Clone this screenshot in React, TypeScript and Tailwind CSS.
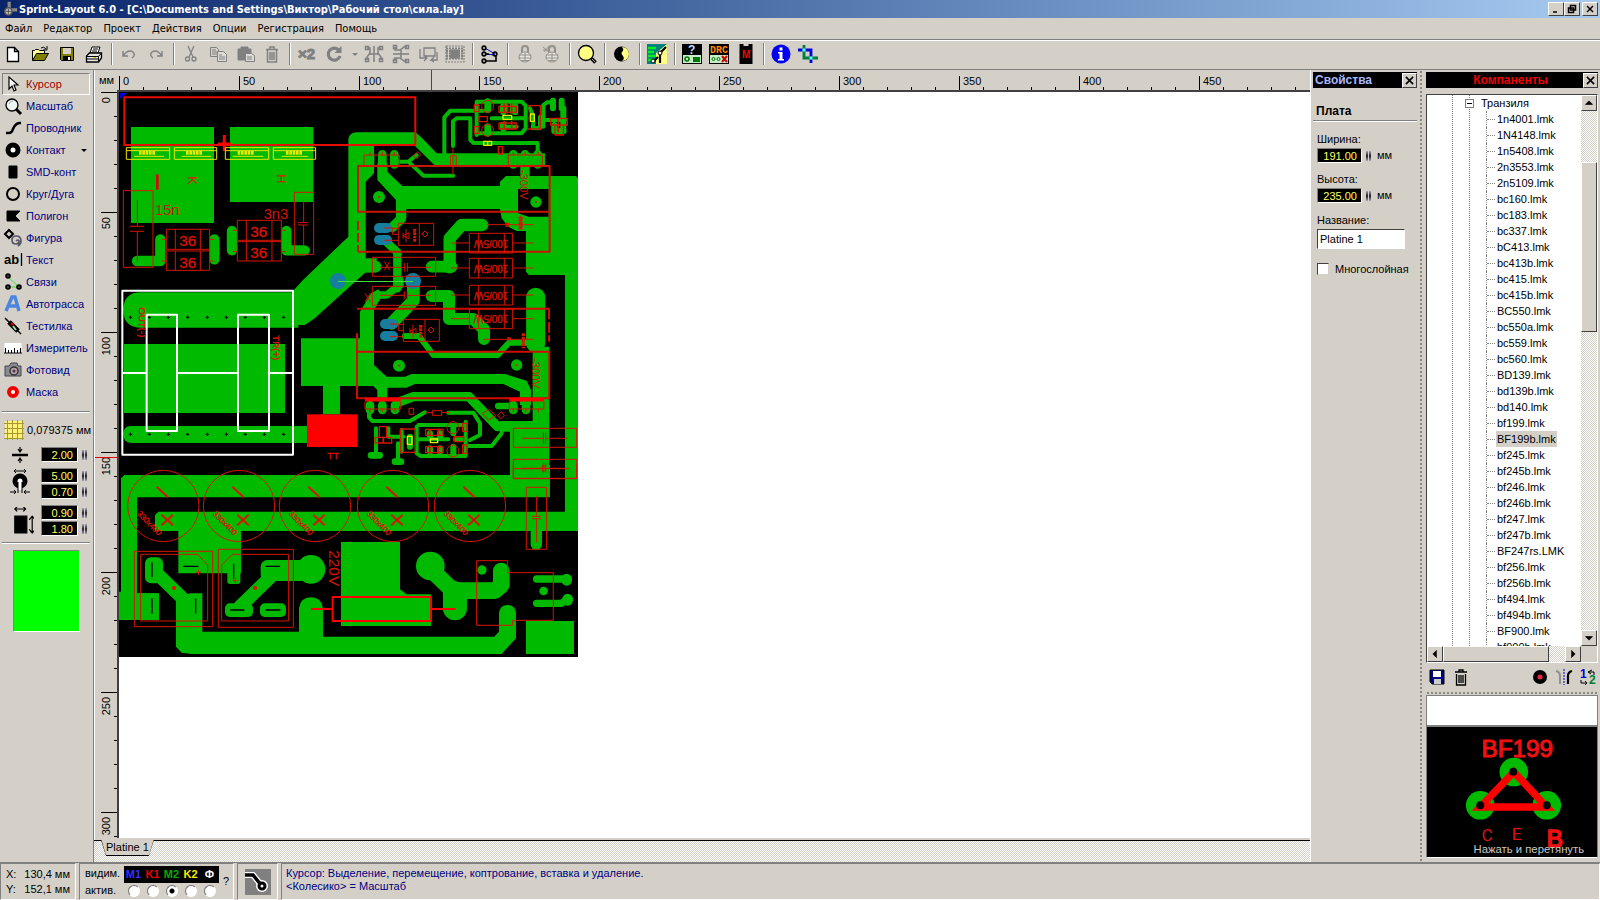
import React from "react";
import clsx from "clsx";

const RAISED = "bg-[#d4d0c8] border border-t-white border-l-white border-b-[#404040] border-r-[#404040]";
const SUNKEN = "border border-t-[#808080] border-l-[#808080] border-b-white border-r-white";
const CHECKER =
  "bg-[repeating-conic-gradient(#ffffff_0_25%,#d4d0c8_0_50%)] bg-[length:2px_2px]";
const DOTS = "bg-[radial-gradient(#8c8880_1px,transparent_1px)] bg-[length:4px_4px]";

const GREEN = "#00ba00";
const RED = "#d81400";

const MENU = ["Файл", "Редактор", "Проект", "Действия", "Опции", "Регистрация", "Помощь"];

const PARTS = [
  "1n4001.lmk", "1N4148.lmk", "1n5408.lmk", "2n3553.lmk", "2n5109.lmk", "bc160.lmk", "bc183.lmk",
  "bc337.lmk", "bC413.lmk", "bc413b.lmk", "bc415.lmk", "bc415b.lmk", "BC550.lmk", "bc550a.lmk",
  "bc559.lmk", "bc560.lmk", "BD139.lmk", "bd139b.lmk", "bd140.lmk", "bf199.lmk", "BF199b.lmk",
  "bf245.lmk", "bf245b.lmk", "bf246.lmk", "bf246b.lmk", "bf247.lmk", "bf247b.lmk", "BF247rs.LMK",
  "bf256.lmk", "bf256b.lmk", "bf494.lmk", "bf494b.lmk", "BF900.lmk", "bf900b.lmk",
];

function Icon({ children, className = "size-5" }: { children: React.ReactNode; className?: string }) {
  return (
    <svg viewBox="0 0 20 20" fill="none" stroke="#000" className={clsx("shrink-0", className)} aria-hidden="true">
      {children}
    </svg>
  );
}

/* ---------- toolbar ---------- */

const padlock = (
  <>
    <path d="M7 9V5q0-3 3-3t3 3v4" strokeWidth="2" />
    <ellipse cx="10" cy="13" rx="6" ry="5" fill="#e8e6e0" />
    <path d="M4 11h12M4 14h12M6 16.500h8M10 9v8" />
  </>
);

const TOOLBAR: ({ name: string; art: React.ReactNode } | "sep" | "drop")[] = [
  { name: "Новый", art: <path d="M4.500 3.500h7l4 4v10h-11zM11.500 3.500v4h4" fill="#fff" strokeWidth="1.300" /> },
  {
    name: "Открыть",
    art: (
      <>
        <path d="M2.500 16.500v-10h2l1-1h3l1 1h5v3" fill="#ffff9c" />
        <path d="M2.500 16.500l4-7h12l-4 7z" fill="#808000" />
        <path d="M11 4q3-2 5 1M17 2v4h-4" />
      </>
    ),
  },
  {
    name: "Сохранить",
    art: (
      <>
        <path d="M3.500 3.500h13v13h-12l-1-1z" fill="#808000" />
        <path d="M6 4h8v6H6z" fill="#d4d0c8" stroke="none" />
        <path d="M6 12h8v4.500H6z" fill="#000" stroke="none" />
        <path d="M11 13h2v3h-2z" fill="#fff" stroke="none" />
      </>
    ),
  },
  {
    name: "Печать",
    art: (
      <>
        <path d="M6 9l2-6h8l-2 6z" fill="#fff" />
        <path d="M9 5h5M8 7h5" />
        <path d="M2.500 12l3-3h12v5l-3 4h-12z" fill="#e8e6e0" strokeWidth="1.300" />
        <path d="M2.500 12.500h12v5M14.500 12.500l3-3.500M3 15h11" />
        <path d="M10 13.500h2" stroke="#cc0" />
      </>
    ),
  },
  "sep",
  { name: "Отменить", art: <path d="M4 7v5h5M4.500 11.500Q9 5 14 8q3 3-1 6" stroke="#808080" strokeWidth="1.400" /> },
  { name: "Вернуть", art: <path d="M16 7v5h-5M15.500 11.500Q11 5 6 8q-3 3 1 6" stroke="#808080" strokeWidth="1.400" /> },
  "sep",
  {
    name: "Вырезать",
    art: (
      <g stroke="#808080" strokeWidth="1.300">
        <path d="M7 2l5 11M13 2L8 13" />
        <circle cx="6.500" cy="15" r="2" />
        <circle cx="13" cy="15" r="2" />
      </g>
    ),
  },
  {
    name: "Копировать",
    art: (
      <g stroke="#808080">
        <path d="M2.500 3.500h6l2 2v7h-8z M4 6h4M4 8h5M4 10h5" />
        <path d="M9.500 7.500h6l3 3v7h-9z M11 11h3M11 13h6M11 15h6" fill="#dedbd4" />
      </g>
    ),
  },
  {
    name: "Вставить",
    art: (
      <g stroke="#808080">
        <path d="M3 5h13v11H3zM6 3h7v3H6z" fill="#808080" />
        <path d="M10.500 9.500h6l3 2v6h-9zM12 13h5M12 15h5" fill="#dedbd4" />
      </g>
    ),
  },
  {
    name: "Удалить",
    art: <path d="M4 5.500h12M8 5V3h4v2M5.500 6v12h9V6M8 8v8M10 8v8M12 8v8" stroke="#808080" strokeWidth="1.500" />,
  },
  "sep",
  {
    name: "Дублировать",
    art: (
      <text x="1" y="15" fontSize="15" fontWeight="bold" fill="#808080" stroke="#808080">
        ×2
      </text>
    ),
  },
  {
    name: "Повернуть",
    art: (
      <>
        <path d="M15 6.500A6 6 0 1 0 16 12" stroke="#808080" strokeWidth="3.200" />
        <path d="M17.500 2v7h-7z" fill="#808080" stroke="none" />
      </>
    ),
  },
  "drop",
  {
    name: "Зеркало по горизонтали",
    art: (
      <g stroke="#808080" strokeWidth="1.500">
        <path d="M3 4h3v5L3 13v3M17 4h-3v5l3 4v3M10 2v16M6 10h8" />
        <path d="M1.500 2.500h3v3h-3zM15.500 2.500h3v3h-3zM1.500 14.500h3v3h-3zM15.500 14.500h3v3h-3z" />
      </g>
    ),
  },
  {
    name: "Зеркало по вертикали",
    art: (
      <g stroke="#808080" strokeWidth="1.500">
        <path d="M4 3v3h5l4-3h3M4 17v-3h5l4 3h3M2 10h16M10 6v8" />
        <path d="M2.500 1.500h3v3h-3zM2.500 15.500h3v3h-3zM14.500 1.500h3v3h-3zM14.500 15.500h3v3h-3z" />
      </g>
    ),
  },
  {
    name: "Выровнять",
    art: (
      <g stroke="#808080" strokeWidth="1.300">
        <path d="M6 4h11v8H6zM2 5v9h6M6 11l3 3-3 3M19 8v8h-6l3-3M13 16l3 2" />
      </g>
    ),
  },
  {
    name: "Сетка",
    art: (
      <g stroke="#808080" strokeWidth="1.200">
        <path d="M1 2h18v16H1z" strokeDasharray="2 1" />
        <path d="M1 4.500h18M1 7h18M1 9.500h18M1 12h18M1 14.500h18" strokeDasharray="2 1" strokeWidth="1.800" />
        <path d="M6 6h8v8H6z" fill="#808080" />
      </g>
    ),
  },
  "sep",
  {
    name: "Соединения",
    art: (
      <>
        <path d="M5 4l10 6M5 10l10 1" stroke="#0000c8" />
        <path d="M5 17h11v-6M5 10h4" strokeWidth="1.600" />
        <g strokeWidth="1.700">
          <circle cx="4" cy="4" r="1.800" />
          <circle cx="4" cy="10" r="1.800" />
          <circle cx="4" cy="17" r="1.800" />
          <circle cx="15" cy="10" r="1.800" />
        </g>
      </>
    ),
  },
  "sep",
  { name: "Закрепить", art: <g stroke="#929089">{padlock}</g> },
  { name: "Освободить", art: <g stroke="#929089">{padlock}<path d="M1 3l6 5M7 2L2 8M1 6h6" /></g> },
  "sep",
  {
    name: "Лупа",
    art: (
      <>
        <circle cx="9" cy="9" r="7.500" fill="#ffff84" strokeWidth="1.300" />
        <path d="M14.500 14.500l4 4" strokeWidth="3.500" />
        <path d="M15 15l3 3" stroke="#aaa" />
      </>
    ),
  },
  "sep",
  {
    name: "Контраст",
    art: (
      <>
        <circle cx="9.500" cy="10" r="7.500" fill="#000" stroke="none" />
        <path d="M10 3a7 7 0 0 1 0 14q3-2 1-5-3-3 0-5 1-2-1-4z" fill="#ffff84" stroke="none" />
      </>
    ),
  },
  "sep",
  {
    name: "Фото",
    art: (
      <>
        <path d="M0 0h20v20H0z" fill="#ffff84" stroke="none" />
        <path d="M0 0h20L9 9v11H0z" fill="#008080" stroke="none" />
        <path d="M1 4h8M1 8h6M1 12h8M1 16h6" stroke="#0e2" strokeWidth="2.500" />
        <path d="M19 3l-6 6v10M6 18l5-5" strokeWidth="2.200" />
        <circle cx="13" cy="9" r="2" fill="#fff" />
        <circle cx="6" cy="17" r="2" fill="#fff" />
      </>
    ),
  },
  "sep",
  {
    name: "Справка по плате",
    art: (
      <>
        <path d="M0 0h20v20H0z" fill="#000" stroke="none" />
        <path d="M1 11h18v8H1z" fill="#c8ecc8" stroke="none" />
        <text x="6" y="10" fontSize="12" fontWeight="bold" fill="#bdf" stroke="none">?</text>
        <circle cx="5" cy="15" r="2" stroke="#007800" strokeWidth="1.600" />
        <path d="M11 13h7v5h-7z" fill="#007800" stroke="none" />
      </>
    ),
  },
  {
    name: "DRC",
    art: (
      <>
        <path d="M0 0h20v20H0z" fill="#000" stroke="none" />
        <path d="M1 11h18v8H1z" fill="#c8ecc8" stroke="none" />
        <text x="1" y="9" fontSize="10" fontWeight="bold" fill="#f80" stroke="none" fontFamily="Liberation Mono">DRC</text>
        <circle cx="4.500" cy="15" r="1.500" stroke="#007800" />
        <circle cx="9.500" cy="15" r="1.500" stroke="#007800" />
        <path d="M13 12l5 6M18 12l-5 6" stroke="#c00" strokeWidth="2" />
      </>
    ),
  },
  {
    name: "Макрос",
    art: (
      <>
        <path d="M3.500 0h4v2h5V0h4v20h-13z" fill="#000" stroke="none" />
        <text x="6" y="14" fontSize="10" fontWeight="bold" fill="#f00" stroke="none">M</text>
      </>
    ),
  },
  "sep",
  {
    name: "Информация",
    art: (
      <>
        <circle cx="10" cy="10" r="9.500" fill="#0000f0" stroke="none" />
        <path d="M8.500 3.500h3v3h-3zM7 8h4.500v7H13v1.500H7V15h1.500V9.500H7z" fill="#fff" stroke="none" />
      </>
    ),
  },
  {
    name: "Обрезка",
    art: (
      <>
        <path d="M0 6h13v13" stroke="#0000e0" strokeWidth="2.800" />
        <path d="M6 1v13h14" stroke="#007c3c" strokeWidth="2.800" />
        <path d="M4.500 4.500h3v3h-3zM11.500 12.500h3v3h-3z" fill="#5ff" stroke="none" />
      </>
    ),
  },
];

function Toolbar() {
  return (
    <div className="flex h-[31px] items-center border-t border-b border-t-[#808080] border-b-[#808080] pb-px shadow-[inset_0_1px_#fff]">
      {TOOLBAR.map((t, i) => {
        if (t === "sep") return <span key={i} className="ml-[3px] mr-1 h-[22px] w-px bg-[#808080] shadow-[1px_0_#fff]" />;
        if (t === "drop")
          return (
            <button key={i} type="button" aria-label="Угол" className="flex w-[13px] justify-center">
              <span className="border-x-[3px] border-t-[3px] border-x-transparent border-t-[#808080]" />
            </button>
          );
        return (
          <button key={i} type="button" title={t.name} className="flex w-[27px] justify-center pr-[2px]">
            <Icon>{t.art}</Icon>
          </button>
        );
      })}
    </div>
  );
}

/* ---------- left panel ---------- */

const TOOLS: { label: string; art: React.ReactNode }[] = [
  { label: "Курсор", art: <path d="M6 3v12l3-3 2 5 2-1-2-5h4z" fill="#fff" strokeWidth="1.200" /> },
  {
    label: "Масштаб",
    art: (
      <>
        <circle cx="9" cy="9" r="6" fill="#eef4f4" strokeWidth="1.300" />
        <path d="M13 13l5 5" strokeWidth="3" />
        <path d="M6 8q1-3 4-3" stroke="#9bb" />
      </>
    ),
  },
  { label: "Проводник", art: <path d="M3 15h3q3 0 4-4 2-5 6-6h2" strokeWidth="2.500" /> },
  { label: "Контакт", art: <circle cx="10" cy="10" r="5" fill="#fff" strokeWidth="5" /> },
  { label: "SMD-конт", art: <path d="M6 4h8v12H6z" fill="#000" /> },
  { label: "Круг/Дуга", art: <circle cx="10" cy="10" r="6" strokeWidth="2" /> },
  { label: "Полигон", art: <path d="M4 5h13l-5 5 5 5H4z" fill="#000" /> },
  {
    label: "Фигура",
    art: (
      <>
        <path d="M6 2l4 4-4 4-4-4z" strokeWidth="2" />
        <path d="M13 13q2-2 3 0 0 3-3 3-4 0-4-4t4-4q5 0 5 5 0 3-3 5" stroke="#556" strokeWidth="1.700" />
      </>
    ),
  },
  {
    label: "Текст",
    art: (
      <>
        <text x="1" y="14" fontSize="13" fontWeight="bold" fill="#000" stroke="none">ab</text>
        <path d="M18.500 3v13" strokeWidth="1.300" />
      </>
    ),
  },
  {
    label: "Связи",
    art: (
      <>
        <path d="M5 5l11 10H5" stroke="#3e3" />
        <g strokeWidth="2.200" fill="#fff">
          <circle cx="5" cy="4" r="1.700" />
          <circle cx="5" cy="15" r="1.700" />
          <circle cx="16" cy="15" r="1.700" />
        </g>
      </>
    ),
  },
  { label: "Автотрасса", art: <path d="M3 17L9 3h3l4 14M6 12h8" stroke="#4a86e0" strokeWidth="3.400" /> },
  {
    label: "Тестилка",
    art: (
      <>
        <path d="M2 2l5 5M14 14l4 4" strokeWidth="1.500" />
        <path d="M6 6l9 9" strokeWidth="5" />
        <path d="M8 7l2 2" stroke="#e00" strokeWidth="2" />
        <path d="M10 10l3 4" stroke="#9ed89e" strokeWidth="2" />
      </>
    ),
  },
  {
    label: "Измеритель",
    art: (
      <>
        <path d="M1.500 5h17v10h-17z" fill="#fff" stroke="none" />
        <path d="M1 15h18M2.500 15v-5M5.500 15v-3M8.500 15v-3M11.500 15v-5M14.500 15v-3M17.500 15v-5" />
      </>
    ),
  },
  {
    label: "Фотовид",
    art: (
      <>
        <path d="M2 6h4l2-3h6l1 3h3v10H2z" fill="#8a8a92" stroke="#44444c" />
        <circle cx="11" cy="11" r="4" fill="#b9a0a0" stroke="#333" strokeWidth="1.500" />
        <circle cx="11" cy="11" r="1.500" fill="#435" stroke="none" />
      </>
    ),
  },
  { label: "Маска", art: <circle cx="10" cy="10" r="4" fill="#fff" stroke="#f00000" strokeWidth="4" /> },
];

function Knob() {
  return (
    <span className="flex gap-px" aria-hidden="true">
      <span className="h-[10px] w-[2px] bg-gradient-to-b from-[#a8a8b8] via-[#202030] to-[#a8a8b8]" />
      <span className="h-[10px] w-[2px] bg-gradient-to-b from-[#a8a8b8] via-[#202030] to-[#a8a8b8]" />
    </span>
  );
}

function NumField({ label, value, className }: { label: string; value: string; className: string }) {
  return (
    <span className="flex items-center gap-1">
      <input
        aria-label={label}
        defaultValue={value}
        className={clsx("h-[15px] border border-[#808080] border-r-white border-b-white bg-black px-1 text-right text-[11px] leading-none text-[#ffff60]", className)}
      />
      <Knob />
    </span>
  );
}

function ToolPanel() {
  return (
    <aside className="flex w-[94px] shrink-0 flex-col border-r border-r-[#808080] px-[2px] pt-[3px]">
      <nav className="flex flex-col">
        {TOOLS.map((t, i) => (
          <button
            key={t.label}
            type="button"
            className={clsx(
              "flex h-[22px] items-center gap-[3px] whitespace-nowrap border text-[11px] text-[#000080]",
              i === 0 ? "mr-px border-t-[#808080] border-l-[#808080] border-b-white border-r-white text-[#a00000]" : "border-transparent"
            )}
          >
            <Icon>{t.art}</Icon>
            <span>{t.label}</span>
            {t.label === "Контакт" && (
              <span className="ml-3 border-x-[3px] border-t-[3px] border-x-transparent border-t-black" />
            )}
          </button>
        ))}
      </nav>
      <hr className="mt-2 mr-px border-t-[#808080] shadow-[0_1px_#fff]" />
      <button type="button" className="mt-[8px] flex h-[20px] items-center gap-[3px] whitespace-nowrap pl-[2px] text-[11px]">
        <Icon>
          <path d="M1 1h18v18H1z" fill="#fff078" stroke="none" />
          <path d="M3.500 0v20M8.500 0v20M13.500 0v20M0 3.500h20M0 8.500h20M0 13.500h20M18.500 0v20M0 18.500h20" stroke="#a89830" />
        </Icon>
        <span>0,079375 мм</span>
      </button>
      <div className="mt-[7px] flex flex-col gap-[6px]">
        <div className="flex h-[15px] items-center justify-between pl-2 pr-1">
          <Icon>
            <path d="M2 10h16" strokeWidth="2.500" />
            <path d="M10 2v4M10 14v4M8 4l2 3 2-3M8 16l2-3 2 3" strokeWidth="1.200" />
          </Icon>
          <NumField label="Ширина проводника" value="2.00" className="w-[37px]" />
        </div>
        <div className="flex h-[31px] items-center justify-between pl-2 pr-1">
          <Icon className="h-[30px] w-[20px]">
            <g transform="translate(0 -3)">
              <path d="M4 0h12M6-2L4 0l2 2M14-2l2 2-2 2" />
              <circle cx="10" cy="10" r="5" fill="#fff" strokeWidth="5" />
              <path d="M8 11h4v8H8z" fill="#fff" stroke="none" />
              <path d="M8 11v11M12 11v11M0 21h6M4 19l2 2-2 2M20 21h-6M16 19l-2 2 2 2" />
            </g>
          </Icon>
          <div className="flex flex-col gap-px">
            <NumField label="Диаметр контакта" value="5.00" className="w-[37px]" />
            <NumField label="Отверстие" value="0.70" className="w-[37px]" />
          </div>
        </div>
        <div className="flex h-[31px] items-center justify-between pl-2 pr-1">
          <Icon className="h-[28px] w-[24px]">
            <path d="M4 6h10v14H4z" fill="#000" />
            <path d="M4 0h9M6-2L4 0l2 2M11-2l2 2-2 2M18.500 6v14M16 9l2.500-3L21 9M16 17l2.500 3 2.500-3" />
          </Icon>
          <div className="flex flex-col gap-px">
            <NumField label="Ширина SMD" value="0.90" className="w-[37px]" />
            <NumField label="Высота SMD" value="1.80" className="w-[37px]" />
          </div>
        </div>
      </div>
      <hr className="mt-[6px] mr-px border-t-[#808080] shadow-[0_1px_#fff]" />
      <div className={clsx("ml-[11px] mt-[7px] h-[82px] w-[67px] bg-[#00ff00]", SUNKEN)} />
    </aside>
  );
}

/* ---------- board ---------- */

const g = (x: number, y: number) => `translate(${x} ${y}) scale(.3333)`;

function Resistor({ y, x = 373 }: { y: number; x?: number }) {
  return (
    <g>
      <path d={`M${x} ${y}h130v59h-130zM${x + 28} ${y}v59M${x + 105} ${y}v59M318 ${y + 29}h${x - 318}M${x + 130} ${y + 29}h62`} />
      <text transform={`translate(${x + 117} ${y + 19}) rotate(180)`} fontSize="30" fill={RED} strokeWidth="1">
        100/5W
      </text>
    </g>
  );
}

function Chip({ x, y, w = 130, h = 60 }: { x: number; y: number; w?: number; h?: number }) {
  return (
    <g>
      <path d={`M${x} ${y}h${w}v${h}h${-w}zM${x + 27} ${y}v${h}M${x + w - 28} ${y}v${h}M${x - 14} ${y + 30}h14M${x + w} ${y + 30}h14`} />
      <text x={x + 39} y={y + 50} fontSize="46" fill={RED} strokeWidth="1">
        36
      </text>
    </g>
  );
}

function Board() {
  return (
    <svg viewBox="119 92 459 565" className="block h-[565px] w-[459px]" fill="none" strokeLinejoin="round" fontFamily="Liberation Sans">
      <rect x="119" y="92" width="459" height="565" fill="#000" />

      {/* copper, upper left */}
      <g transform={g(115, 85)} stroke={GREEN} strokeWidth="31" strokeLinecap="round">
        <path d="M48 126h249v288H48zM345 126h250v225H345z" fill={GREEN} stroke="none" />
        <path d="M136 463v65H66M298 463v60M351 438v58M514 438v58h55" />
      </g>

      {/* copper, upper right */}
      <g transform={g(345, 85)} stroke={GREEN} strokeLinecap="round">
        <path
          d="M10 165Q12 142 35 142H212L232 160 275 205H600V240H268L210 183H87V265L62 290V520H95V562H62L-90 699-120 720H-156V618L-126 585 10 455z"
          fill={GREEN}
          stroke="none"
        />
        <path
          d="M97 235H127V260L172 303H465V290L483 273H692L700 280V1300H660V570H552L543 560V438H515L490 425 470 400 465 372H184V400L153 380V345L97 285z"
          fill={GREEN}
          stroke="none"
        />
        <path d="M526 240h28v40h-28z" fill={GREEN} stroke="none" />
        <path d="M519 312h92v83h-60l-32-10z" fill="#000" stroke="none" />
        <circle cx="102" cy="336" r="18" fill={GREEN} stroke="none" />
        <circle cx="573" cy="351" r="17" fill={GREEN} stroke="none" />
        <path d="M75 208v30M112 208v30M148 208v30M505 208v30M540 208v30M578 208v30" strokeWidth="26" />
        <path d="M168 370v32l-25 24" strokeWidth="30" />
        <path d="M125 472l32 30V610" strokeWidth="25" />
        <path d="M412 420H350L314 460V547" strokeWidth="37" />
        <path d="M320 545H260M92 545H50" strokeWidth="35" />
        <g strokeWidth="12">
          <path d="M298 205V97L316 77H395M324 183V108L335 100H376V165L386 174H578V205M160 230H190L235 272H325M190 230L215 210" />
          <path d="M395 50V150M395 50H530L542 62V130L530 145H400M440 100H545M395 77h20M480 60v20M500 60v20M470 125h45" />
          <path d="M555 70q15 30 8 60M585 95v35H570M595 125V60L606 52H622M600 105h60" />
        </g>
        <path d="M428 50v25M428 125v20M475 65v15M510 65v15M475 120v10" strokeWidth="20" />
        <path d="M624 47V70M650 47V70M655 70v65M628 120v18h28" strokeWidth="18" />
      </g>

      {/* copper, middle right */}
      <g transform={g(345, 280)} stroke={GREEN} strokeLinecap="round">
        <path
          d="M-132 175H45V95L78 40 100 28 112 45 87 90V255L125 290H180L200 282H480L545 302 558 330V375H525V335L475 312H210L185 323H127V360H97V330L85 318H-132z"
          fill={GREEN}
          stroke="none"
        />
        <path d="M165 0V15L125 45H95" strokeWidth="22" />
        <path d="M205 10V62L140 130" strokeWidth="38" />
        <path d="M260 48H312V117H385L417 148V177" strokeWidth="36" />
        <path d="M180 168H222L265 225H458L492 188H550" strokeWidth="18" />
        <path d="M572 52V190" strokeWidth="57" />
        <path d="M550 200H613V600H495V455H465V423H563V215z" fill={GREEN} stroke="none" />
        <path d="M165 365L205 350H372L458 440" strokeWidth="28" />
        <circle cx="162" cy="257" r="18" fill={GREEN} stroke="none" />
        <circle cx="515" cy="255" r="17" fill={GREEN} stroke="none" />
        <path d="M75 375v15M112 375v15M150 375v15M505 375v15M543 375v15M580 375v15" strokeWidth="26" />
        <path d="M460 378h40M78 526h26M150 545h18" strokeWidth="20" />
        <g strokeWidth="12">
          <path d="M470 440V460L440 498H370M72 395V412L82 423H195L240 397M310 398H385L405 430V465L375 480" />
          <path d="M93 445V520M130 445V470H175M159 490V540M170 450V515M215 440V520L227 528H362V425M220 435H362M225 478H310M330 478h30" />
        </g>
        <path d="M325 440v20M325 500v20M255 460v10M285 460v10M255 505v10M285 505v10M195 470v30" strokeWidth="18" />
      </g>

      {/* copper, transformer */}
      <g transform={g(115, 280)} fill={GREEN}>
        <path d="M78 37H550V143H78Q25 143 25 90T78 37zM27 192H510V399H27zM50 438H577V489H50Q25 489 25 463T50 438zM624 318H675V403H624z" />
        {[46, 103, 160, 218, 277, 334, 391, 448, 506].map((x) => (
          <path key={x} d={`M${x - 5} 112h10m-5-5v10M${x - 5} 463h10m-5-5v10`} stroke="#000" strokeWidth="3" />
        ))}
        <rect x="576" y="403" width="152" height="98" fill="#f00" />
      </g>

      {/* copper, lower part */}
      <g transform={g(115, 465)} stroke={GREEN} strokeLinecap="round">
        <g fill={GREEN} stroke="none">
          <path d="M28 30H1185V0H1305V97H66V385H132V465H12V380H18V40zM130 140H1350V0H1390V198H378V325H190V198H120V150z" />
          <path d="M183 405L225 385H262V500H552V430Q556 397 588 397T624 430V515H1138L1152 500V445Q1155 420 1178 420T1203 445V520L1160 567H230L200 563 183 545z" />
          <path d="M678 231H855V373L875 388H948V483H678zM1233 468H1377V567H1233z" />
          <path d="M470 285H588V348H470z" />
          <rect x="90" y="277" width="54" height="78" rx="18" />
          <rect x="62" y="385" width="70" height="77" rx="10" />
          <rect x="337" y="280" width="39" height="77" rx="8" />
          <rect x="437" y="285" width="80" height="63" rx="20" />
          <rect x="330" y="415" width="84" height="41" rx="14" />
          <rect x="435" y="415" width="78" height="41" rx="14" />
          <circle cx="588" cy="313" r="43" />
          <circle cx="946" cy="303" r="43" />
          <circle cx="1101" cy="315" r="14" />
          <circle cx="1286" cy="378" r="13" />
        </g>
        <path d="M125 325L215 412M478 325L375 425" strokeWidth="40" />
        <path d="M955 320L1015 378" strokeWidth="50" />
        <path d="M1020 385V430" strokeWidth="72" />
        <path d="M1020 377H1140L1159 360V318" strokeWidth="50" />
        <path d="M1265 342H1355M1265 415H1340L1358 402" strokeWidth="22" />
        <path d="M1355 342v4M1358 402v4" strokeWidth="32" />
        <path d="M1264 195V238" strokeWidth="34" />
        <path d="M111 293v42M111 402v42M242 402v42M356 297v42M207 304h42M452 304h42M347 435h40M453 435h42" stroke="#000" strokeWidth="4" />
      </g>

      {/* selected pads and airwire */}
      <g fill="#187ea0">
        <circle cx="338" cy="281" r="8" />
        <circle cx="413" cy="281" r="8" />
        <rect x="374" y="223" width="18" height="10" rx="5" />
        <rect x="374" y="235" width="18" height="10" rx="5" />
        <rect x="380" y="319" width="18" height="10" rx="5" />
        <rect x="380" y="331" width="18" height="10" rx="5" />
        <path d="M338 281.500H413" stroke="#40e040" />
      </g>

      {/* silkscreen, upper left */}
      <g transform={g(115, 85)} stroke={RED} strokeWidth="3">
        <path d="M28 37H901V180H28z" stroke="#e80c00" strokeWidth="6" />
        <path d="M328 150v48M308 177h40" stroke="#f00" strokeWidth="9" />
        <path d="M127 268v46" stroke="#e00000" strokeWidth="8" />
        <path d="M25 317H114V547H25zM67 345v78M67 440v90M45 424h42M45 439h42M538 322H596V508H538zM566 347v66M566 420v62M549 413h30M549 420h30" />
        <Chip x={154} y={433} />
        <Chip x={154} y={498} h={58} />
        <Chip x={367} y={406} w={132} />
        <Chip x={367} y={470} w={132} h={58} />
        <g fill={RED} stroke="none" fontSize="44">
          <text x="120" y="391">15n</text>
          <text x="446" y="402">3n3</text>
          <text transform="translate(218 274) rotate(90)" fontSize="38">K</text>
          <text transform="translate(487 268) rotate(90)" fontSize="38">H</text>
        </g>
        <g stroke="#e8e800">
          <path d="M34 188H164V223H34zM34 197H164M178 188H305V223H178zM178 197H305M331 188H461V223H331zM331 197H461M475 188H602V223H475zM475 197H602M57 214h90M200 214h88M353 214h92M500 214h80" />
          <path d="M72 203h48M213 203h48M368 203h48M513 203h48" strokeWidth="12" strokeDasharray="8 2" />
        </g>
      </g>

      {/* silkscreen, upper right */}
      <g transform={g(345, 85)} stroke={RED} strokeWidth="3">
        <path d="M39 243H614V380H39zM614 380V500H39" stroke="#c81400" strokeWidth="6" />
        <path d="M39 408V500" stroke="#c81400" strokeWidth="6" strokeDasharray="28 8" />
        <path d="M57 210H163V243H57zM490 210H592V243H490zM75 200v12M112 200v12M148 200v12M505 200v12M540 200v12M580 200v12" />
        <path d="M160 415H266V481H160zM223 415v66M160 430h-18v18h18M118 429h25M118 466h42M240 438l9 9-9 9-9-9z" />
        <path d="M174 452l18-9 0 18zM174 443v18M183 432v40" />
        <path d="M209 432v38" strokeWidth="9" strokeDasharray="8 2" />
        <path d="M82 517H272V574H82zM105 547h72M188 547h70M178 534v26M187 534v26M118 530l16 26M134 530l-16 26" />
        <Resistor y={445} />
        <Resistor y={520} />
        <path d="M425 419h140M527 392v42" />
        <path d="M527 395v38M487 413v12" strokeWidth="12" strokeDasharray="6 2" />
        <path d="M324 190v80M317 212h17v30h-17zM205 212l14-12 9 9-14 12z" />
        <path d="M388 60h14v20h-14zM388 125h14v20h-14zM402 95h25v15h-25zM462 64h52v18h-52zM462 114h52v18h-52zM548 62h38v70h-38zM617 100h50v20h-50zM630 120h25v30h-25zM460 185h12v22h-12z" strokeWidth="4" />
        <path d="M478 55v30M488 55v30M500 55v30M478 108v26M500 108v26M640 98v45" strokeWidth="5" />
        <circle cx="428" cy="64" r="18" />
        <circle cx="428" cy="136" r="18" />
        <circle cx="573" cy="351" r="2" />
        <circle cx="102" cy="336" r="2" />
        <text transform="translate(526 254) rotate(90)" fontSize="34" fill={RED} stroke="none">-300V</text>
        <path d="M416 169h24v12h-24zM428 169v12M474 91h26v12h-26zM556 87h12v22h-12z" stroke="#e8e800" strokeWidth="4" />
      </g>

      {/* silkscreen, middle right */}
      <g transform={g(345, 280)} stroke={RED} strokeWidth="3">
        <path d="M36 215H613V355H36zM36 86H613M36 160V215" stroke="#d00c00" strokeWidth="6" />
        <path d="M612 86V185" stroke="#d00c00" strokeWidth="6" strokeDasharray="32 8" />
        <path d="M60 359H167M493 359H597" stroke="#f00" strokeWidth="11" />
        <path d="M60 365v22h107v-22M493 365v22h104v-22M75 385v12M112 385v12M150 385v12M505 385v12M543 385v12M580 385v12" />
        <path d="M82 19H272V76H82zM105 46h72M188 46h70M178 34v24M187 34v24M60 40l16 26M76 40l-16 26" />
        <Resistor y={16} />
        <Resistor y={87} />
        <path d="M175 118H283V184H175zM240 118v66M175 133h-15v18h15M135 132h25M135 170h40M258 141l9 9-9 9-9-9zM415 178h150" />
        <path d="M195 154l18-9v18zM195 145v18M204 134v40" />
        <path d="M227 135v38M535 160v45M492 172v12" strokeWidth="10" strokeDasharray="8 2" />
        <path d="M505 445H695V502H505zM505 538H695V595H505zM532 475h62M602 475h66M532 565h62M602 565h66M595 458v34M602 458v34M595 549v30M602 549v30" />
        <path d="M262 392h28v14h-28zM240 398h22M290 398h25M412 400l22-12 18 20-22 12zM192 385h14v18h-14zM458 405l12-10 8 12-12 10z" />
        <path d="M90 472h50v17h-50zM103 440h22v32h-22zM167 447h44v70h-44zM242 448h52v18h-52zM242 500h52v18h-52zM328 470h28v15h-28zM353 430h13v24h-13zM353 495h13v25h-13z" strokeWidth="4" />
        <path d="M255 448v20M280 448v20M255 500v20M280 500v20M115 470v20" strokeWidth="5" />
        <circle cx="324" cy="443" r="18" />
        <circle cx="324" cy="513" r="18" />
        <circle cx="162" cy="257" r="2" />
        <circle cx="515" cy="255" r="2" />
        <text transform="translate(560 234) rotate(90)" fontSize="34" fill={RED} stroke="none">-300V</text>
        <path d="M187 469h14v24h-14zM256 477h22v11h-22z" stroke="#e8e800" strokeWidth="4" />
      </g>

      {/* silkscreen, transformer */}
      <g transform={g(115, 280)} stroke="#fff" strokeWidth="6">
        <path d="M22 32H534V524H22zM95 104H186V453H95zM369 104H462V453H369zM22 279H95M186 279H369M462 279H534" />
        <g fill={RED} stroke={RED} strokeWidth="1" fontSize="29">
          <text transform="translate(72 82) rotate(90)">OUT(-)</text>
          <text transform="translate(473 166) rotate(90)">TR(+)</text>
          <text x="637" y="536">TT</text>
        </g>
      </g>

      {/* silkscreen, lower part */}
      <g transform={g(115, 465)} stroke={RED} strokeWidth="3">
        {[145, 372, 600, 834, 1065].map((cx) => (
          <g key={cx}>
            <circle cx={cx} cy="123" r="107" />
            <path d={`M${cx - 20} 65l34 32M${cx - 5} 149l34 32m0-32l-34 32`} strokeWidth="6" />
            <text transform={`translate(${cx - 80} 148) rotate(45)`} fontSize="24" fill={RED} stroke={RED} strokeWidth="1">
              330х400
            </text>
          </g>
        ))}
        <path d="M58 259H293V485H58zM77 268H248L278 300V468H77zM310 253H535V487H310zM320 300L352 268H521V468H320z" />
        <path d="M243 322h16M251 314v16M353 347h16M361 339v16" />
        <circle cx="177" cy="369" r="5" fill={RED} />
        <circle cx="420" cy="369" r="5" fill={RED} />
        <path d="M653 396H948V468H653zM588 432H653M948 432H1022" stroke="#f00" strokeWidth="6" />
        <path d="M1085 287H1178V323H1315V466H1193V481H1085zM1234 67H1295V253H1234zM1265 92v62M1265 161v71M1251 154h28M1251 161h28M1195 11h88M1220 11h145M1195 0v41H1385V0M1283 0v20M1290 0v20" />
        <text transform="translate(643 256) rotate(90)" fontSize="46" fill={RED} stroke="none">220V</text>
      </g>
      <path d="M120 93h7l-7 6z" fill="#0000e0" />
    </svg>
  );
}

/* ---------- work area ---------- */

function HRuler() {
  return (
    <div className="relative flex h-[20px] overflow-hidden text-[11px] leading-none">
      {Array.from({ length: 10 }, (_, i) => (
        <div key={i} className="flex w-[120px] shrink-0 items-end">
          <span className="h-[14px] w-6 shrink-0 overflow-visible border-l border-black pl-[3px]">{i * 50}</span>
          {[1, 2, 3, 4].map((n) => (
            <span key={n} className="h-[3px] w-6 shrink-0 border-l border-black" />
          ))}
        </div>
      ))}
      <span className="absolute left-[312px] top-0 h-full w-px bg-red-600" />
    </div>
  );
}

function VRuler() {
  return (
    <div className="relative flex w-[22px] flex-col overflow-hidden text-[11px] leading-none">
      {Array.from({ length: 7 }, (_, i) => (
        <div key={i} className="flex h-[120px] shrink-0 flex-col items-end">
          <span className="flex h-6 w-4 shrink-0 border-t border-black pt-[4px]">
            <span className="rotate-180 self-start [writing-mode:vertical-rl]">{i * 50}</span>
          </span>
          {[1, 2, 3, 4].map((n) => (
            <span key={n} className="h-6 w-[3px] shrink-0 border-t border-black" />
          ))}
        </div>
      ))}
      <span className="absolute left-0 top-[365px] h-px w-full bg-red-600" />
    </div>
  );
}

function WorkArea() {
  return (
    <main className="flex min-w-0 flex-1 flex-col">
      <div className="grid min-h-0 flex-1 grid-cols-[22px_minmax(0,1fr)] grid-rows-[20px_minmax(0,1fr)] border-l border-l-white pb-[2px]">
        <span className="self-center pl-1 text-[11px]">мм</span>
        <div className="pl-[2px]">
          <HRuler />
        </div>
        <div className="flex pt-[2px]">
          <VRuler />
        </div>
        <div className="overflow-hidden border-l-2 border-t-2 border-[#404040] bg-white">
          <Board />
        </div>
      </div>
      <div className={clsx("h-[22px] shrink-0 border-t border-black pl-[7px]", CHECKER)}>
        <button type="button" className="-mt-px flex h-[16px] items-center bg-[#d4d0c8] px-0 text-[11px] [clip-path:polygon(0_0,100%_0,calc(100%-5px)_100%,5px_100%)]">
          <svg viewBox="0 0 5 16" className="h-4 w-[5px]" stroke="#000" fill="none" aria-hidden="true"><path d="M0 0l4.500 15.500" /></svg>
          <span className="flex h-4 items-center border-b border-black">Platine 1</span>
          <svg viewBox="0 0 5 16" className="h-4 w-[5px]" stroke="#000" fill="none" aria-hidden="true"><path d="M5 0L.5 15.500" /></svg>
        </button>
      </div>
    </main>
  );
}

/* ---------- right panels ---------- */

function CloseButton() {
  return (
    <button type="button" aria-label="Закрыть" className={clsx("flex h-[15px] w-[15px] shrink-0 items-center justify-center", RAISED)}>
      <Icon className="size-[9px]">
        <path d="M2 2l16 16M18 2L2 18" strokeWidth="3.500" />
      </Icon>
    </button>
  );
}

function Properties() {
  return (
    <section className="w-[109px] shrink-0 border-l border-white pl-[2px] text-[11px]">
      <header className="mt-[2px] mr-[2px] flex h-[16px] items-center bg-black pl-[2px] font-bold text-[#a6b8ff]">
        <h2 className="flex-1 text-[12px] leading-none">Свойства</h2>
        <CloseButton />
      </header>
      <h3 className="ml-[3px] mt-[14px] text-[12px] leading-[18px] font-bold">Плата</h3>
      <hr className="mr-[2px] border-t-[#808080] shadow-[0_1px_#fff]" />
      <div className="flex flex-col pl-1 pt-[10px]">
        <span className="leading-[16px]">Ширина:</span>
        <div className="mb-[8px] mt-px flex items-center gap-[6px]">
          <NumField label="Ширина" value="191.00" className="w-[45px]" />
          <span className="leading-[15px]">мм</span>
        </div>
        <span className="leading-[16px]">Высота:</span>
        <div className="mt-px flex items-center gap-[6px]">
          <NumField label="Высота" value="235.00" className="w-[45px]" />
          <span className="leading-[15px]">мм</span>
        </div>
        <label htmlFor="board-name" className="mt-[9px] leading-[16px]">Название:</label>
        <input
          id="board-name"
          defaultValue="Platine 1"
          className="mt-px h-[20px] w-[88px] border border-t-[#404040] border-l-[#404040] border-b-white border-r-white bg-white px-[2px] text-[11px]"
        />
        <label className="mt-[12px] flex items-center gap-[6px] whitespace-nowrap leading-[16px]">
          <input type="checkbox" className="h-[12px] w-[12px] appearance-none border border-t-[#404040] border-l-[#404040] border-b-[#d4d0c8] border-r-[#d4d0c8] bg-white" />
          Многослойная
        </label>
      </div>
    </section>
  );
}

function Arrow({ dir }: { dir: "up" | "down" | "left" | "right" }) {
  const d = { up: "M5 12h10L10 7z", down: "M5 8h10l-5 5z", left: "M12 5v10L7 10z", right: "M8 5v10l5-5z" }[dir];
  return (
    <button type="button" aria-label={dir} className={clsx("flex size-4 shrink-0 items-center justify-center", RAISED)}>
      <Icon className="size-[14px]">
        <path d={d} fill="#000" />
      </Icon>
    </button>
  );
}

function Preview() {
  return (
    <div className="flex h-[132px] justify-center overflow-hidden border border-[#808080] border-b-white bg-black">
      <svg viewBox="50 379 511 393" className="h-[131px] w-[170px] shrink-0" fill="none" fontFamily="Liberation Sans">
        <g fill={GREEN}>
          <circle cx="311" cy="514" r="43" />
          <circle cx="210" cy="614" r="43" />
          <circle cx="410" cy="614" r="43" />
        </g>
        <path d="M311 514L210 619H410z" stroke="#f00" strokeWidth="22" />
        <g fill="#000">
          <circle cx="309" cy="513" r="12" />
          <circle cx="210" cy="614" r="12" />
          <circle cx="410" cy="614" r="12" />
        </g>
        <g fill="#f01010" stroke="#f01010" fontSize="73">
          <text x="214" y="468" strokeWidth="3">BF199</text>
          <text x="214" y="720" fontSize="52" stroke="none" fill="#d81414" fontFamily="Roboto">C</text>
          <text x="305" y="718" fontSize="52" stroke="none" fill="#d81414" fontFamily="Roboto">E</text>
          <text x="410" y="740" strokeWidth="5">B</text>
        </g>
        <text x="190" y="756" fontSize="34" fill="#c8c8c8">Нажать и перетянуть</text>
      </svg>
    </div>
  );
}

function Components() {
  return (
    <section className="flex w-[176px] shrink-0 flex-col pl-[2px] pr-[2px] text-[11px]">
      <header className="mt-[2px] flex h-[16px] items-center bg-black font-bold text-[#f00000]">
        <h2 className="flex-1 pl-3 text-center text-[12px] leading-none">Компаненты</h2>
        <CloseButton />
      </header>
      <div className="mt-[6px] flex min-h-0 flex-1 flex-col border border-t-[#404040] border-l-[#404040] border-white bg-white">
        <div className="flex min-h-0 flex-1">
          <div className="flex min-w-0 flex-1 overflow-hidden pl-[25px]">
            <span className="w-[17px] shrink-0 border-l border-dotted border-[#808080]" />
            <span className="w-[17px] shrink-0 border-l border-dotted border-[#808080]">
              <button type="button" aria-label="Свернуть" className="-ml-[5px] mt-1 flex size-[9px] items-center justify-center border border-[#808080] bg-white">
                <span className="h-px w-[5px] bg-black" />
              </button>
            </span>
            <ul className="min-w-0 flex-1 leading-4">
              <li className="-ml-[5px] h-4">Транзиля</li>
              {PARTS.map((p) => (
                <li key={p} className="flex h-4 items-center border-l border-dotted border-[#808080]">
                  <span className="mr-px w-2 shrink-0 border-t border-dotted border-[#808080]" />
                  <span className={clsx("px-px", p === "BF199b.lmk" && "bg-[#d4d0c8]")}>{p}</span>
                </li>
              ))}
            </ul>
          </div>
          <div className={clsx("flex w-4 shrink-0 flex-col", CHECKER)}>
            <Arrow dir="up" />
            <span className="grow-[51]" />
            <span className={clsx("grow-[168]", RAISED)} />
            <span className="grow-[299]" />
            <Arrow dir="down" />
          </div>
        </div>
        <div className="flex h-4 bg-[#d4d0c8]">
          <div className={clsx("flex flex-1", CHECKER)}>
            <Arrow dir="left" />
            <span className={clsx("grow-[104]", RAISED)} />
            <span className="grow-[16]" />
            <Arrow dir="right" />
          </div>
          <span className="w-4 shrink-0" />
        </div>
      </div>
      <div className="flex h-[28px] items-center gap-1 pl-px">
        <button type="button" title="Сохранить">
          <Icon>
            <path d="M3 3h14v14H5l-2-2z" fill="#000080" />
            <path d="M6 4h8v6H6z" fill="#fff" stroke="none" />
            <path d="M7 12h7v5H7z" fill="#ccc" stroke="none" />
          </Icon>
        </button>
        <button type="button" title="Удалить">
          <Icon>
            <path d="M4 5h12M8 5V3h4v2M5.500 7v11h9V7M8 8v8M10 8v8M12 8v8" strokeWidth="1.300" />
          </Icon>
        </button>
        <span className="flex-1" />
        <button type="button" title="Контакт">
          <Icon>
            <circle cx="10" cy="10" r="7" fill="#000" stroke="none" />
            <circle cx="10" cy="10" r="2.500" fill="#f02040" stroke="none" />
          </Icon>
        </button>
        <button type="button" title="Зеркало">
          <Icon>
            <path d="M2 4q4 1 4 5v8" stroke="#909090" strokeWidth="2" />
            <path d="M18 4q-4 1-4 5v8" strokeWidth="2.200" />
            <path d="M10 2v16" stroke="#0000c0" strokeDasharray="2 1" />
          </Icon>
        </button>
        <button type="button" title="Сторона">
          <Icon>
            <text x="2" y="11" fontSize="12" fontWeight="bold" fill="#0000d0" stroke="none">1</text>
            <text x="11" y="17" fontSize="12" fontWeight="bold" fill="#008030" stroke="none">2</text>
            <path d="M10 5h6v3M14 3l-4 2 3 2M3 13v3h6M7 14l2 2-2 2" />
          </Icon>
        </button>
      </div>
      <div className={clsx("h-[4px] shrink-0", DOTS)} />
      <div className="h-[31px] shrink-0 border border-[#808080] bg-white" />
      <Preview />
      <div className="h-1 shrink-0" />
    </section>
  );
}

/* ---------- status bar ---------- */

const LAYERS = [
  { name: "M1", cls: "text-[#3030ff]" },
  { name: "K1", cls: "text-[#f00000]" },
  { name: "M2", cls: "text-[#00b000]" },
  { name: "K2", cls: "text-[#f0f000]" },
  { name: "Ф", cls: "text-white" },
];

function StatusBar() {
  return (
    <footer className="flex h-[38px] shrink-0 gap-[3px] border-t border-t-[#808080] text-[11px]">
      <div className={clsx("flex w-[76px] flex-col justify-center px-[5px] pt-px leading-[15px]", SUNKEN)}>
        <div className="flex justify-between"><span>X:</span><span>130,4 мм</span></div>
        <div className="flex justify-between"><span>Y:</span><span>152,1 мм</span></div>
      </div>
      <div className={clsx("flex w-[155px] items-center pl-[5px]", SUNKEN)}>
        <div className="flex w-[39px] flex-col leading-[17px]">
          <span>видим.</span>
          <span>актив.</span>
        </div>
        <div className="flex">
          {LAYERS.map((l) => (
            <div key={l.name} className="flex w-[19px] flex-col items-center">
              <button type="button" className={clsx("h-[17px] w-full bg-black text-[11px] leading-[17px] font-bold", l.cls)}>{l.name}</button>
              <input
                type="radio"
                name="layer"
                aria-label={l.name}
                defaultChecked={l.name === "M2"}
                className="mt-[2px] size-[12px] appearance-none rounded-full border border-t-[#707070] border-l-[#707070] border-b-white border-r-white bg-white checked:bg-[radial-gradient(#000_2px,#fff_3px)]"
              />
            </div>
          ))}
        </div>
        <button type="button" className="ml-1">?</button>
      </div>
      <div className={clsx("flex w-[41px] items-center justify-center", SUNKEN)}>
        <svg viewBox="0 0 26 26" className="size-[26px]" fill="none" aria-hidden="true">
          <path d="M0 0h26v26H0z" fill="#808080" />
          <path d="M0 6h8l9 11" stroke="#fff" strokeWidth="6" />
          <circle cx="17" cy="17" r="6" fill="#fff" />
          <path d="M0 6h8l9 11" stroke="#000" strokeWidth="3.500" />
          <circle cx="17" cy="17" r="3" fill="#fff" stroke="#000" strokeWidth="3" />
        </svg>
      </div>
      <div className={clsx("flex-1 pl-1 pt-[3px] leading-[13px] text-[#000080]", SUNKEN)}>
        <p>Курсор: Выделение, перемещение, коптрование, вставка и удаление.</p>
        <p>&lt;Колесико&gt; = Масштаб</p>
      </div>
    </footer>
  );
}

export default function App() {
  return (
    <div className="flex h-screen flex-col overflow-hidden bg-[#d4d0c8] font-['Liberation_Sans',sans-serif] text-black">
      <header className="flex h-[18px] shrink-0 items-center bg-gradient-to-r from-[#0a246a] to-[#a6caf0] pl-[2px] pr-[2px]">
        <Icon className="size-4">
          <path d="M9 1v10h10" stroke="#888" strokeWidth="4" />
          <circle cx="8" cy="13" r="4.500" fill="#bbb" stroke="#555" strokeWidth="2" />
          <path d="M8 10v6M5 13h6" stroke="#444" />
        </Icon>
        <h1 className="flex-1 pl-px font-['DejaVu_Sans_Condensed','Noto_Sans',sans-serif] text-[11px] leading-none font-bold text-white">
          Sprint-Layout 6.0 - [C:\Documents and Settings\Виктор\Рабочий стол\сила.lay]
        </h1>
        {["M4 16h8", "M7 3h10v9H7zM3 8h10v9H3z", "M4 4l12 12M16 4L4 16"].map((d, i) => (
          <button key={d} type="button" aria-label={["Свернуть", "Восстановить", "Закрыть"][i]} className={clsx("flex h-[14px] w-4 items-center justify-center", i === 2 && "ml-[2px]", RAISED)}>
            <Icon className="size-[10px]">
              <path d={d} strokeWidth="3" fill={i === 1 ? "#d4d0c8" : "none"} />
            </Icon>
          </button>
        ))}
      </header>
      <nav className="flex h-[21px] shrink-0 items-center gap-[11px] pl-[5px] pt-px font-['DejaVu_Sans_Condensed','Noto_Sans',sans-serif] text-[11px]">
        {MENU.map((m) => (
          <button key={m} type="button">{m}</button>
        ))}
      </nav>
      <Toolbar />
      <div className="flex min-h-0 flex-1">
        <ToolPanel />
        <WorkArea />
        <Properties />
        <div className={clsx("w-[5px] shrink-0", DOTS)} />
        <Components />
      </div>
      <StatusBar />
    </div>
  );
}
